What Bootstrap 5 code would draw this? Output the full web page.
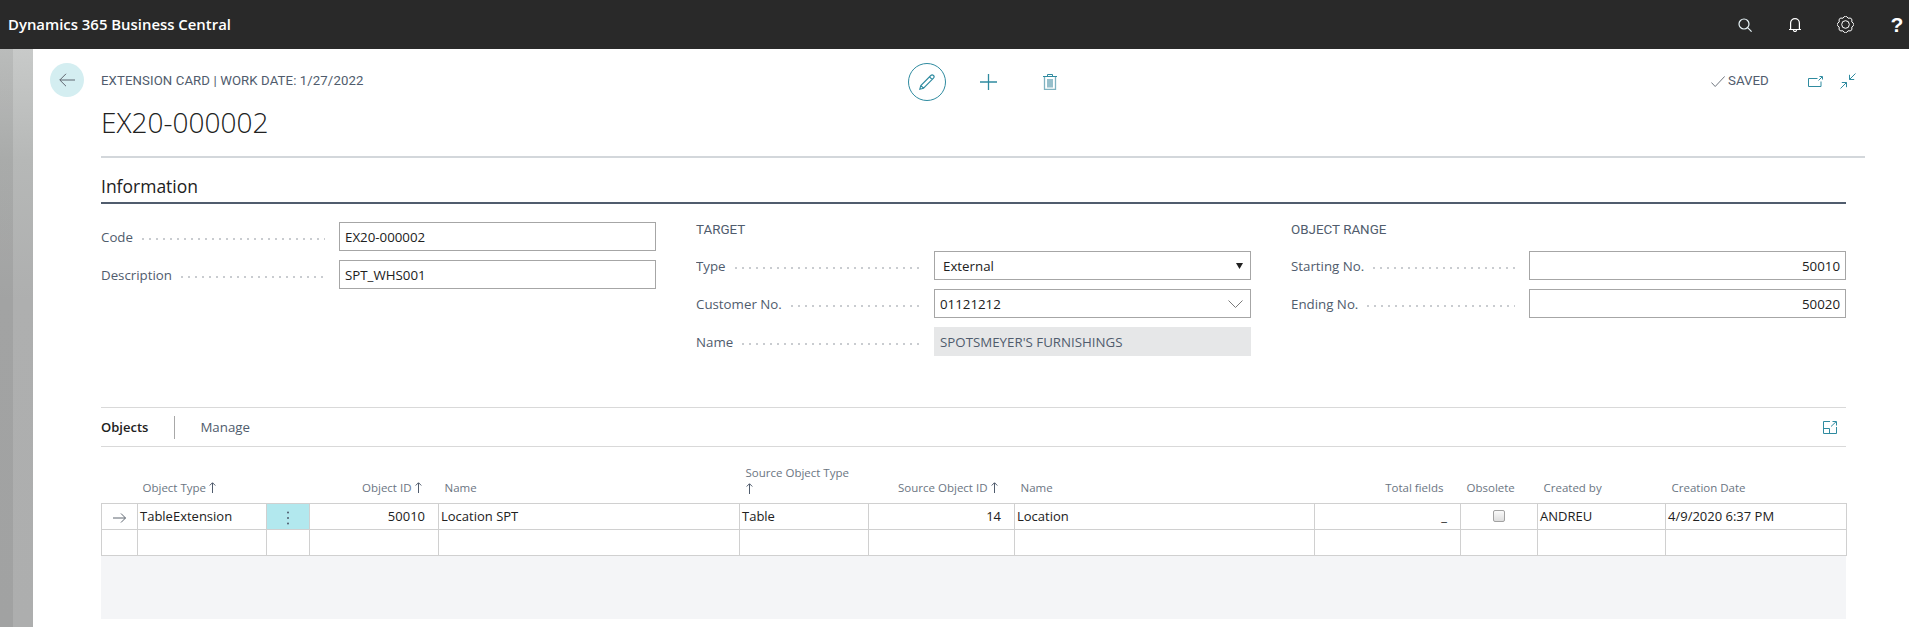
<!DOCTYPE html>
<html lang="en"><head><meta charset="utf-8"><title>Extension Card</title>
<link rel="stylesheet" href="https://cdn.jsdelivr.net/npm/bootstrap@5.3.0/dist/css/bootstrap.min.css">
<style>
html,body{height:100%;overflow:hidden}
body{background:linear-gradient(90deg,rgba(0,0,0,.07) 0 13px,transparent 13px),linear-gradient(180deg,#c8cac9 49px,#b6b8b7 160px,#aeafaf 300px,#adaeae 100%);font-family:"Open Sans","Liberation Sans",sans-serif;font-size:13.3px;color:#212121;width:1909px;height:627px}
.topbar{height:49px;background:#292929;padding:0 7px 0 8px;align-items:center;flex-wrap:nowrap}
.brandtxt{font-size:14.9px;font-weight:600;color:#fff;padding:0;margin:0;line-height:1}
.topicons svg{display:block}
.helpmark{color:#fff;font-weight:700;font-size:21px;line-height:20px;width:10px;margin-left:38px;display:flex;justify-content:center;font-family:"Liberation Sans",sans-serif}
.sheet{margin-left:33px;background:#fff;height:578px;padding:14px 63px 0 17px;overflow:hidden}
.headrow{height:34px;align-items:center}
.backbtn{width:34px;height:34px;border-radius:50%;background:#d4eef1;flex:none;margin-right:17px;display:flex;align-items:center;justify-content:center}
.cap{font-family:Roboto,"Liberation Sans",sans-serif;font-size:13.2px;letter-spacing:.1px;color:#505c6d;white-space:nowrap;width:807px;flex:none;margin-top:2px}
.cardtools{align-items:center;flex:none;margin-top:4px}
.pencil{width:38px;height:38px;border:1px solid #2f8ba0;border-radius:50%;display:flex;align-items:center;justify-content:center}
.savedbox{margin-left:auto;margin-right:-19px;align-items:center;margin-top:2px}
.savedtxt{font-family:Roboto,"Liberation Sans",sans-serif;font-size:13.3px;color:#505c6d;margin-left:3px;width:80px}
.maintitle{font-size:28px;font-weight:300;color:#212121;margin:6px 0 0 51px;line-height:38px}
.rule1{height:2px;background:#d3d7db;margin:15px -19px 0 51px}
.infohd{margin:18px 0 0 51px;font-size:17.5px;line-height:20px;font-weight:400;color:#212121;padding-bottom:6px;border-bottom:2px solid #505c6d}
.fieldsgrid{display:grid;grid-template-columns:555px 555px 555px;column-gap:40px;margin:18px 0 0 51px}
.grphd{font-family:Roboto,"Liberation Sans",sans-serif;font-size:13.4px;line-height:15px;color:#505c6d;margin:0 0 14px}
.fld{display:flex;height:29px;margin-bottom:9px;align-items:center}
.fldlabel{width:238px;flex:none;display:flex;align-items:center;color:#505c6d;padding:2px 14px 0 0;white-space:nowrap;overflow:hidden}
.fldlabel i{flex:1;height:2px;background:radial-gradient(circle at 1px 1px,#c9ccd0 .9px,transparent 1.1px) 0 0/7px 2px repeat-x;margin:3px 0 0 9px}
.fldinput{width:317px;height:29px;flex:none;border:1px solid #a6a6a6;border-radius:0;padding:1px 5px 0;color:#212121;line-height:27px;background:#fff;display:flex;align-items:center;justify-content:space-between}
.fldinput.pad{padding-left:8px;padding-right:7px}
.fldinput.ro{background:#e6e7e8;border-color:#e6e7e8;color:#505c6d}
.numr{justify-content:flex-end}
.tabsbar{margin:42px 0 0 51px;border-top:1px solid #d9d9d9;border-bottom:1px solid #d9d9d9;height:40px;align-items:center}
.tabsbar .t1{font-weight:600;font-size:13px;color:#212121;padding-right:26px;border-right:1px solid #a8a8a8;line-height:23px}
.tabsbar .t2{color:#505c6d;margin-left:25px;margin-top:1px}
.listwrap{margin:0 0 0 51px}
table.objgrid{table-layout:fixed;width:1745px;margin:0;border-collapse:collapse;font-size:13px;color:#212121;--bs-table-bg:transparent}
table.objgrid th{font-weight:400;font-size:11.5px;color:#6b7582;border:0;border-bottom:1px solid #d0d0d0;padding:0 6px 8px;vertical-align:bottom;line-height:15px;white-space:nowrap;overflow:visible}
table.objgrid thead tr{height:56px}
table.objgrid td{height:26px;padding:0 2px;border:1px solid #d0d0d0;vertical-align:middle;white-space:nowrap;overflow:hidden;background:#fff;line-height:24px}
table.objgrid th.endcol{padding-right:17px}
table.objgrid th.firsthd{padding-left:5px}
table.objgrid td.endcol{padding-right:13px}
table.objgrid td.mnu{background:#b2e8ee;text-align:center;padding:0}
.mnu svg,td svg{vertical-align:middle}
.sortarrow{margin-left:3px;vertical-align:-1px}
.fillarea{height:63px;background:#f4f5f7;width:1745px}
.cb{display:block;margin:0 auto 1px;width:12px;height:12px;border:1px solid #a2a2a2;border-radius:2px;background:linear-gradient(#fafafa,#dedede)}
.c1{width:36px}.c2{width:129px}.c3{width:43px}.c4{width:129px}.c5{width:301px}.c6{width:129px}.c7{width:146px}.c8{width:300px}.c9{width:146px}.c10{width:77px}.c11{width:128px}.c12{width:181px}
</style></head><body>
<svg width="0" height="0" class="position-absolute"><defs><symbol id="up" viewBox="0 0 7 11"><path d="M3.500 11V1M.7 3.500 3.500.7l2.800 2.800" fill="none" stroke="#505c6d" stroke-width="1"/></symbol></defs></svg>
<nav class="navbar topbar d-flex justify-content-between">
<div class="navbar-brand brandtxt">Dynamics 365 Business Central</div>
<div class="d-flex topicons align-items-center">
<svg width="14" height="14" viewBox="0 0 14 14" fill="none" stroke="#e8f4f8" stroke-width="1.2" style="margin-right:37px"><circle cx="6" cy="6" r="5"/><path d="M9.600 9.600l4 4"/></svg>
<svg width="12" height="15" viewBox="0 0 12 15" fill="none" stroke="#fff" stroke-width="1.2" style="margin-right:36px"><path d="M1.600 12.500V6a4.400 4.400 0 0 1 8.800 0v6.500M0 12.500h12M4.500 13a1.500 1.500 0 0 0 3 0"/></svg>
<svg width="17" height="17" viewBox="0 0 17 17" fill="none" stroke="#fff" stroke-width="1"><circle cx="8.500" cy="8.500" r="3.800"/><path d="M14.780 5.900Q18.800 8.500 14.780 11.100 15.800 15.800 11.100 14.780 8.500 18.800 5.900 14.780 1.200 15.800 2.220 11.100-1.800 8.500 2.220 5.900 1.200 1.200 5.900 2.220 8.500-1.800 11.100 2.220 15.800 1.200 14.780 5.900z"/></svg>
<span class="helpmark">?</span>
</div></nav>
<div class="sheet">
<div class="d-flex headrow">
<div class="backbtn"><svg width="16" height="14" viewBox="0 0 16 14" fill="none" stroke="#5f6670" stroke-width="1"><path d="M16 7H.8M7 .8.800 7 7 13.200"/></svg></div>
<div class="cap">EXTENSION CARD | WORK DATE: 1/27/2022</div>
<div class="d-flex cardtools">
<div class="pencil"><svg width="16" height="16" viewBox="0 0 16 16" fill="none" stroke="#2f8ba0" stroke-width="1.1"><path d="M.8 15.200l1-3.700L11.800 1.500a1.400 1.400 0 0 1 2.700 2.700L4.500 14.200zM1.800 11.500l2.700 2.700M10.500 2.800l2.700 2.700"/></svg></div>
<svg width="17" height="16" viewBox="0 0 17 16" fill="none" stroke="#2f8ba0" stroke-width="1.300" style="margin-left:34px"><path d="M8.500 0v16M0 8h17"/></svg>
<svg width="14" height="16" viewBox="0 0 14 16" style="margin-left:46px"><path d="M0 2.500h14M4.500 2V.5h5V2" fill="none" stroke="#2f8ba0"/><path d="M1.500 3v12.400h11V3" fill="none" stroke="#7fb2c0" stroke-width="1.300"/><rect x="4" y="5" width="6" height="8.500" fill="#96bfcb"/></svg>
</div>
<div class="d-flex savedbox">
<svg width="14" height="11" viewBox="0 0 14 11" fill="none" stroke="#5f6670" stroke-width=".9"><path d="M.4 6.500l3.800 4L13.700.4"/></svg>
<span class="savedtxt">SAVED</span>
<svg width="15" height="11" viewBox="0 0 15 11" fill="none" stroke="#2f8ba0" style="margin-right:17px"><path d="M13 5.500v5H.5V2.500h9"/><path d="M10.500 4.500 14 1M11.500.5h3V3.500"/></svg>
<svg width="16" height="16" viewBox="0 0 16 16" fill="none" stroke="#2f8ba0" style="margin-right:9px"><path d="M15.500.5 9.500 6.500M9.500 1.800V6.500h4.700M6.500 9.500l-6 6M1.800 9.500h4.700v4.700"/></svg>
</div>
</div>
<div class="maintitle">EX20-000002</div>
<div class="rule1"></div>
<div class="infohd">Information</div>
<div class="fieldsgrid">
<div>
<div class="fld"><div class="fldlabel">Code<i></i></div><div class="fldinput">EX20-000002</div></div>
<div class="fld"><div class="fldlabel">Description<i></i></div><div class="fldinput">SPT_WHS001</div></div>
</div>
<div>
<div class="grphd">TARGET</div>
<div class="fld"><div class="fldlabel">Type<i></i></div><div class="fldinput pad">External<svg width="7" height="6" viewBox="0 0 7 6"><path d="M0 0h7L3.500 6z" fill="#212121"/></svg></div></div>
<div class="fld"><div class="fldlabel">Customer No.<i></i></div><div class="fldinput">01121212<svg width="15" height="8" viewBox="0 0 15 8" fill="none" stroke="#7a7a7a" style="margin-right:2px"><path d="M.5.500l7 7 7-7"/></svg></div></div>
<div class="fld"><div class="fldlabel">Name<i></i></div><div class="fldinput ro">SPOTSMEYER'S FURNISHINGS</div></div>
</div>
<div>
<div class="grphd">OBJECT RANGE</div>
<div class="fld"><div class="fldlabel">Starting No.<i></i></div><div class="fldinput numr">50010</div></div>
<div class="fld"><div class="fldlabel">Ending No.<i></i></div><div class="fldinput numr">50020</div></div>
</div>
</div>
<div class="d-flex tabsbar">
<span class="t1">Objects</span><span class="t2">Manage</span>
<svg class="ms-auto" width="14" height="13" viewBox="0 0 14 13" fill="none" stroke="#2f8ba0" style="margin-right:9px"><path d="M7 .5H.5v12h13V6M.5 7.500h6v5M8 5.500 13 .8M9.500.5h4V4.500"/></svg>
</div>
<div class="listwrap">
<table class="table objgrid">
<colgroup><col class="c1"><col class="c2"><col class="c3"><col class="c4"><col class="c5"><col class="c6"><col class="c7"><col class="c8"><col class="c9"><col class="c10"><col class="c11"><col class="c12"></colgroup>
<thead><tr>
<th></th><th class="firsthd">Object Type<svg class="sortarrow" width="7" height="11"><use href="#up"/></svg></th><th></th><th class="text-end endcol">Object ID<svg class="sortarrow" width="7" height="11"><use href="#up"/></svg></th><th>Name</th>
<th>Source Object Type<br><svg width="7" height="11"><use href="#up"/></svg></th><th class="text-end endcol">Source Object ID<svg class="sortarrow" width="7" height="11"><use href="#up"/></svg></th><th>Name</th>
<th class="text-end endcol">Total fields</th><th>Obsolete</th><th>Created by</th><th>Creation Date</th>
</tr></thead>
<tbody>
<tr><td class="text-center"><svg width="13" height="10" viewBox="0 0 13 10" fill="none" stroke="#5f6670"><path d="M0 5h12.500M8 .5 12.500 5 8 9.500"/></svg></td><td>TableExtension</td><td class="mnu"><svg width="2" height="14" viewBox="0 0 2 14" fill="#505c6d"><circle cx="1" cy="1.500" r="1"/><circle cx="1" cy="7" r="1"/><circle cx="1" cy="12.500" r="1"/></svg></td><td class="text-end endcol">50010</td><td>Location SPT</td><td>Table</td><td class="text-end endcol">14</td><td>Location</td><td class="text-end endcol">_</td><td><span class="cb"></span></td><td>ANDREU</td><td>4/9/2020 6:37 PM</td></tr>
<tr><td></td><td></td><td></td><td></td><td></td><td></td><td></td><td></td><td></td><td></td><td></td><td></td></tr>
</tbody></table>
<div class="fillarea"></div>
</div>
</div>
<script src="https://cdn.jsdelivr.net/npm/bootstrap@5.3.0/dist/js/bootstrap.bundle.min.js"></script>
</body></html>
